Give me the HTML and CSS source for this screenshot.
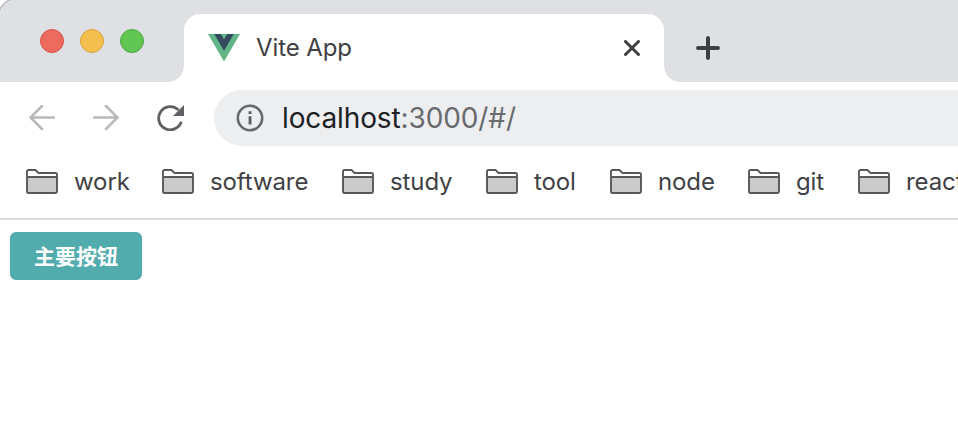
FILE: index.html
```html
<!DOCTYPE html>
<html lang="zh-CN">
<head>
<meta charset="utf-8">
<title>Vite App</title>
<link rel="stylesheet" href="styles.css">
</head>
<body>
<svg class="symbols" aria-hidden="true">
  <symbol id="folder" viewBox="0 0 32 26">
    <path d="M1 8.500h30V23q0 1.500-1.500 1.500h-27Q1 24.500 1 23z" fill="#cbcbcb"/>
    <path d="M1 8V2.500Q1 1 2.500 1H9.500L12.500 4H29.500Q31 4 31 5.500V22.500Q31 24 29.500 24H2.500Q1 24 1 22.500ZM1 8H31" fill="none" stroke="#585858" stroke-width="1.900"/>
  </symbol>
</svg>
<div class="browser">
  <header class="tab-strip">
    <div class="lights"><i class="light red"></i><i class="light yellow"></i><i class="light green"></i></div>
    <div class="tab">
      <svg class="logo" viewBox="0 0 32 28"><path d="M0 0H32L16 27.500Z" fill="#61b587"/><path d="M6.300 0H12.800L16 5.500L19.200 0H25.700L16 16.700Z" fill="#35495e"/></svg>
      <span class="tab-title">Vite App</span>
      <svg class="close" viewBox="0 0 16 16"><path d="M1.500 1.500L14.500 14.500M14.500 1.500L1.500 14.500"/></svg>
    </div>
    <svg class="plus" viewBox="0 0 24 24"><path d="M12 2V22M2 12H22"/></svg>
  </header>
  <nav class="toolbar">
    <svg class="arrow" viewBox="0 0 26 26"><path d="M25 12.500H1.500M13 1L1.500 12.500L13 24"/></svg>
    <svg class="arrow" viewBox="0 0 26 26"><path d="M1 12.500H24.500M13 1L24.500 12.500L13 24"/></svg>
    <svg class="reload" viewBox="0 0 27 26"><path d="M24.300 16.800A11.600 11.600 0 1 1 21.500 5" fill="none" stroke="#5f6063" stroke-width="2.800"/><path d="M27 0V11H16Z" fill="#5f6063"/></svg>
    <div class="address">
      <svg class="info" viewBox="0 0 28 28"><circle cx="14" cy="14" r="12.200" fill="none" stroke="#66686b" stroke-width="2.600"/><path d="M12.600 7.300h2.900v2.800h-2.900zM12.600 12.300h2.900v8.200h-2.900z" fill="#5f6063"/></svg>
      <span class="url"><span class="host">localhost</span><span class="path">:3000/#/</span></span>
    </div>
  </nav>
  <div class="bookmarks">
    <div class="bookmark"><svg><use href="#folder"/></svg><span>work</span></div>
    <div class="bookmark"><svg><use href="#folder"/></svg><span>software</span></div>
    <div class="bookmark"><svg><use href="#folder"/></svg><span>study</span></div>
    <div class="bookmark"><svg><use href="#folder"/></svg><span>tool</span></div>
    <div class="bookmark"><svg><use href="#folder"/></svg><span>node</span></div>
    <div class="bookmark"><svg><use href="#folder"/></svg><span>git</span></div>
    <div class="bookmark"><svg><use href="#folder"/></svg><span>react</span></div>
  </div>
  <main class="page"><button class="primary" type="button">主要按钮</button></main>
</div>
</body>
</html>
```
FILE: styles.css
```css
* { box-sizing: border-box; }
body { margin: 0; background: #fff; font-family: Inter, "Noto Sans CJK SC", sans-serif; overflow: hidden; }
svg { display: block; flex: none; }
.symbols { position: absolute; width: 0; height: 0; }
.browser { width: 958px; height: 444px; overflow: hidden; }
.tab-strip { display: flex; height: 82px; background: radial-gradient(circle at 18px 18px, #dee0e4 19px, #b9babd 19.5px, #b9babd 20.3px, #fff 21px) 0 0 / 18px 18px no-repeat, linear-gradient(#dee0e4, #dee0e4) 18px 0 no-repeat, linear-gradient(#dee0e4, #dee0e4) 0 18px no-repeat; }
.lights { display: flex; gap: 16px; width: 184px; padding: 29px 0 0 40px; }
.light { width: 24px; height: 24px; border-radius: 50%; }
.red { background: #ed6a5e; border: 1px solid #d55549; }
.yellow { background: #f5bf4f; border: 1px solid #d9a33e; }
.green { background: #61c654; border: 1px solid #4ba83f; }
.tab { position: relative; display: flex; align-items: center; width: 480px; height: 68px; margin-top: 14px; padding: 0 24px; background: #fff; border-radius: 16px 16px 0 0; }
.tab::before, .tab::after { content: ""; position: absolute; bottom: 0; width: 16px; height: 16px; }
.tab::before { left: -16px; background: radial-gradient(circle at 0 0, transparent 15.5px, #fff 16px); }
.tab::after { right: -16px; background: radial-gradient(circle at 100% 0, transparent 15.5px, #fff 16px); }
.logo { width: 32px; height: 28px; }
.tab-title { margin-left: 16px; font-size: 24px; line-height: 30px; letter-spacing: -0.1px; color: #3f4042; }
.close { width: 16px; height: 16px; margin-left: auto; }
.close path, .plus path { fill: none; stroke: #3f4042; stroke-width: 3; stroke-linecap: round; }
.plus { width: 24px; height: 24px; margin: 36px 0 0 32px; }
.plus path { stroke-width: 4; }
.toolbar { display: flex; align-items: center; height: 72px; padding-left: 29px; }
.arrow { width: 26px; height: 26px; margin-right: 38px; }
.arrow path { fill: none; stroke: #b8b8b8; stroke-width: 2.500; stroke-linecap: round; }
.reload { width: 27px; height: 26px; margin-right: 30px; }
.address { display: flex; flex: 1; align-items: center; height: 56px; padding-left: 22px; background: #edeef0; border-radius: 28px 0 0 28px; }
.info { width: 28px; height: 28px; }
.url { margin-left: 18px; font-size: 28px; line-height: 36px; letter-spacing: -0.12px; white-space: nowrap; }
.host { color: #202124; }
.path { color: #696b6e; }
.bookmarks { display: grid; grid-template-columns: 136px 180px 144px 124px 138px 110px 120px; align-items: center; height: 66px; padding: 0 0 8px 26px; border-bottom: 2px solid #d9d9d9; }
.bookmark { display: flex; align-items: center; gap: 16px; font-size: 24px; line-height: 32px; letter-spacing: -0.1px; color: #404144; white-space: nowrap; }
.bookmark svg { width: 32px; height: 26px; }
.page { padding: 12px 10px; }
.primary { display: block; width: 132px; height: 48px; padding: 0 0 2px; border: 0; border-radius: 6px; background: #52abad; color: #fff; font: 700 21px/46px "Noto Sans CJK SC", sans-serif; }
```
